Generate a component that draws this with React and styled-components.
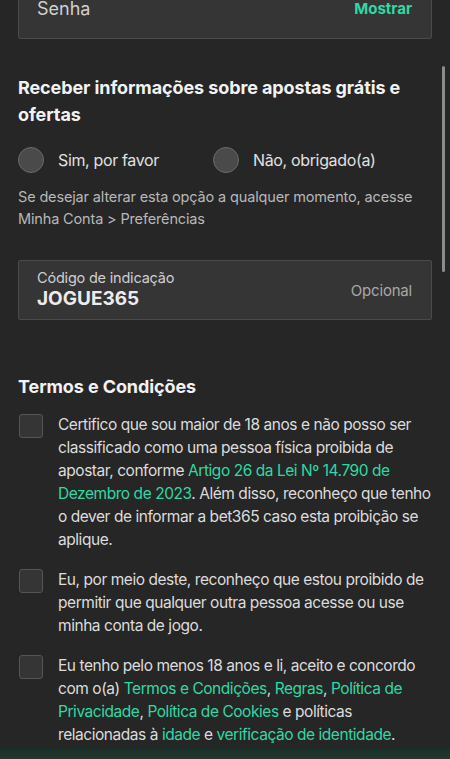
import React, { useState } from 'react'
import styled, { createGlobalStyle } from 'styled-components'

const GlobalStyle = createGlobalStyle`
  html, body {
    margin: 0;
    padding: 0;
    background: #262626;
  }
  body {
    font-family: Inter, "Noto Sans", "Liberation Sans", sans-serif;
    color: #e6e6e6;
    -webkit-font-smoothing: antialiased;
  }
  * {
    box-sizing: border-box;
  }
`

const Screen = styled.div`
  position: relative;
  width: 450px;
  height: 759px;
  overflow: hidden;
  background: #262626;
`

const Page = styled.div`
  margin-top: -21px;
  padding: 0 18px;
  display: flex;
  flex-direction: column;
`

const Field = styled.div`
  height: 60px;
  background: #353535;
  border: 1px solid #4a4a4a;
  border-radius: 2px;
  padding: 0 19px 0 18px;
  display: flex;
  align-items: center;
  justify-content: space-between;
`

const FieldValue = styled.span`
  font-size: 18px;
  color: #d0d0d0;
  margin-top: -1px;
`

const ShowButton = styled.button`
  background: none;
  border: none;
  padding: 0;
  margin-top: -1px;
  font-family: inherit;
  font-size: 15px;
  font-weight: 700;
  color: #2fd9a4;
`

const Section = styled.section`
  margin-top: ${(p) => p.$top}px;
`

const Heading = styled.h2`
  margin: 0;
  font-size: 18px;
  font-weight: 700;
  line-height: 27px;
  letter-spacing: -0.1px;
  color: #f2f2f2;
`

const RadioRow = styled.div`
  margin-top: 19px;
  display: flex;
`

const RadioOption = styled.label`
  width: 195px;
  display: flex;
  align-items: center;
  gap: 14px;
  font-size: 16px;
  letter-spacing: -0.35px;
  color: #e0e0e0;
`

const RadioCircle = styled.span`
  width: 26px;
  height: 26px;
  border-radius: 50%;
  background: #4a4a4a;
  border: 1.5px solid #6a6a6a;
  flex-shrink: 0;
`

const Hint = styled.p`
  margin: 13px 0 0;
  font-size: 14.5px;
  line-height: 22px;
  letter-spacing: -0.15px;
  color: #b8b8b8;
`

const ReferralBox = styled(Field)`
  margin-top: 30px;
  height: 60px;
`

const ReferralText = styled.div`
  display: flex;
  flex-direction: column;
`

const ReferralLabel = styled.span`
  font-size: 14.5px;
  line-height: 18px;
  letter-spacing: -0.2px;
  color: #cfcfcf;
`

const ReferralCode = styled.span`
  font-size: 19px;
  line-height: 24px;
  font-weight: 700;
  color: #ececec;
`

const Optional = styled.span`
  font-size: 15px;
  letter-spacing: -0.2px;
  color: #a8a8a8;
`

const TermsList = styled.div`
  margin-top: 13px;
  display: flex;
  flex-direction: column;
  gap: 17px;
`

const TermRow = styled.div`
  display: flex;
  align-items: flex-start;
  gap: 15px;
`

const CheckBox = styled.span`
  margin: 1px 0 0 1px;
  width: 24px;
  height: 24px;
  border-radius: 3px;
  background: #353535;
  border: 1.5px solid #555;
  flex-shrink: 0;
`

const TermText = styled.p`
  margin: 0;
  font-size: 15.5px;
  line-height: 23px;
  letter-spacing: -0.45px;
  color: #dcdcdc;
`

const Link = styled.a`
  color: #2fd9a4;
  text-decoration: none;
`

const Scrollbar = styled.div`
  position: absolute;
  right: 5px;
  top: 66px;
  width: 3px;
  height: 206px;
  border-radius: 2px;
  background: #8c8c8c;
`

const BottomBar = styled.div`
  position: absolute;
  left: 0;
  right: 0;
  bottom: 0;
  height: 11px;
  background: linear-gradient(#1a2e28, #1f3a31);
`

const Radio = ({ label }) => (
  <RadioOption>
    <RadioCircle />
    {label}
  </RadioOption>
)

const App = () => {
  const [showPass, setShowPass] = useState(false)
  return (
    <Screen>
      <GlobalStyle />
      <Page>
        <Field>
          <FieldValue>Senha</FieldValue>
          <ShowButton onClick={() => setShowPass(!showPass)}>Mostrar</ShowButton>
        </Field>

        <Section $top={35}>
          <Heading>Receber informações sobre apostas grátis e ofertas</Heading>
          <RadioRow>
            <Radio label="Sim, por favor" />
            <Radio label="Não, obrigado(a)" />
          </RadioRow>
          <Hint>
            Se desejar alterar esta opção a qualquer momento, acesse Minha Conta &gt;
            Preferências
          </Hint>
        </Section>

        <ReferralBox>
          <ReferralText>
            <ReferralLabel>Código de indicação</ReferralLabel>
            <ReferralCode>JOGUE365</ReferralCode>
          </ReferralText>
          <Optional>Opcional</Optional>
        </ReferralBox>

        <Section $top={53}>
          <Heading>Termos e Condições</Heading>
          <TermsList>
            <TermRow>
              <CheckBox />
              <TermText>
                Certifico que sou maior de 18 anos e não posso ser classificado como
                uma pessoa física proibida de apostar, conforme{' '}
                <Link>Artigo 26 da Lei Nº 14.790 de Dezembro de 2023</Link>. Além
                disso, reconheço que tenho o dever de informar a bet365 caso esta
                proibição se aplique.
              </TermText>
            </TermRow>
            <TermRow>
              <CheckBox />
              <TermText>
                Eu, por meio deste, reconheço que estou proibido de permitir que
                qualquer outra pessoa acesse ou use minha conta de jogo.
              </TermText>
            </TermRow>
            <TermRow>
              <CheckBox />
              <TermText>
                Eu tenho pelo menos 18 anos e li, aceito e concordo com o(a){' '}
                <Link>Termos e Condições</Link>, <Link>Regras</Link>,{' '}
                <Link>Política de Privacidade</Link>, <Link>Política de Cookies</Link>{' '}
                e políticas relacionadas à <Link>idade</Link> e{' '}
                <Link>verificação de identidade</Link>.
              </TermText>
            </TermRow>
          </TermsList>
        </Section>
      </Page>
      <Scrollbar />
      <BottomBar />
    </Screen>
  )
}

export default App
